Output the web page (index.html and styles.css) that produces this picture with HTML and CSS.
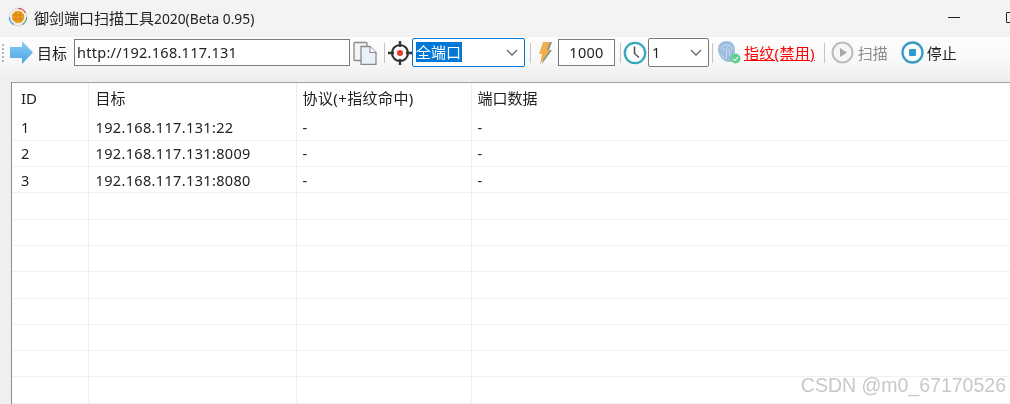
FILE: index.html
```html
<!DOCTYPE html>
<html lang="zh-CN">
<head>
<meta charset="utf-8">
<title>御剑端口扫描工具2020</title>
<link rel="stylesheet" href="styles.css">
</head>
<body>
<div class="window">
  <header class="titlebar">
    <svg class="app-icon" viewBox="0 0 20 20" width="20" height="20">
      <circle cx="10" cy="10" r="8.600" fill="none" stroke="#d8d8d8" stroke-width="1.200"/>
      <path d="M10 1.400A8.600 8.600 0 0 1 17.500 6" fill="none" stroke="#e0584a" stroke-width="1.200"/>
      <path d="M18.600 10A8.600 8.600 0 0 1 14 17.600" fill="none" stroke="#5cb270" stroke-width="1.200"/>
      <path d="M6 17.600A8.600 8.600 0 0 1 1.400 10" fill="none" stroke="#4f9fd8" stroke-width="1.200"/>
      <circle cx="10" cy="10" r="6.200" fill="#f0a020"/>
      <path d="M4.500 8h11M4.500 12h11M8 4.500v11M12 4.500v11" stroke="#c87c10" stroke-width=".8"/>
    </svg>
    <span class="title">御剑端口扫描工具<span class="title-ver">2020(Beta 0.95)</span></span>
    <div class="winctl">
      <span class="min"></span>
      <span class="max"></span>
    </div>
  </header>

  <div class="toolbar">
    <span class="grip"></span>
    <svg class="i-arrow" viewBox="0 0 23 23" width="23" height="23">
      <defs><linearGradient id="arrowfill" x1="0" y1="0" x2="0" y2="1"><stop offset="0" stop-color="#8ad0f6"/><stop offset="1" stop-color="#48a4e2"/></linearGradient></defs>
      <path d="M0 6h12V0l11 11.500L12 23v-6H0z" fill="url(#arrowfill)"/>
    </svg>
    <span class="label lbl-target">目标</span>
    <div class="field f-url">http://192.168.117.131</div>
    <svg class="i-copy" viewBox="0 0 25 24" width="25" height="24">
      <rect x="1" y="1.500" width="13" height="18" rx="1" fill="#f4f4f4" stroke="#8a8a8a" stroke-width="1.300"/>
      <path d="M8 5.500h9l6 6v12H8z" fill="#eaf1fa" stroke="#8a8a8a" stroke-width="1.300"/>
      <path d="M17 5.500v6h6" fill="#fff" stroke="#8a8a8a" stroke-width="1.100"/>
    </svg>
    <span class="sep s1"></span>
    <svg class="i-target" viewBox="0 0 24 24" width="24" height="24">
      <circle cx="12" cy="12" r="8" fill="none" stroke="#333" stroke-width="2.200"/>
      <path d="M12 0v6M12 18v6M0 12h6M18 12h6" stroke="#333" stroke-width="2.400"/>
      <circle cx="12" cy="12" r="3" fill="#e23b2e"/>
    </svg>
    <div class="select sel-port"><span class="selected">全端口</span>
      <svg class="chev" viewBox="0 0 12 7" width="12" height="7"><path d="M1 1l5 5 5-5" fill="none" stroke="#666" stroke-width="1.300"/></svg>
    </div>
    <span class="sep s2"></span>
    <svg class="i-bolt" viewBox="0 0 14 24" width="14" height="24">
      <path d="M7 1h7L11 9h3L4 23l2-10H3z" fill="#8f8f8f"/>
      <path d="M5 1h7L9 9h3L2 23l2-10H1z" fill="#eeb04c"/>
    </svg>
    <div class="field f-num">1000</div>
    <span class="sep s3"></span>
    <svg class="i-clock" viewBox="0 0 24 24" width="24" height="24">
      <circle cx="12" cy="12" r="10.200" fill="#fff" stroke="#36a9bd" stroke-width="2.300"/>
      <path d="M11.500 5.500V12.500L16 16.500" fill="none" stroke="#555" stroke-width="1.600"/>
    </svg>
    <div class="select sel-thread"><span>1</span>
      <svg class="chev" viewBox="0 0 12 7" width="12" height="7"><path d="M1 1l5 5 5-5" fill="none" stroke="#666" stroke-width="1.300"/></svg>
    </div>
    <span class="sep s4"></span>
    <svg class="i-finger" viewBox="0 0 23 23" width="23" height="23">
      <path d="M0 8C0 3 4 0 8.500 0S17 3 17 9c0 5-1 11-5 12C6 22 0 15 0 8z" fill="#9dbde0"/>
      <path d="M3 9c0-7 11-7 11 0M5.500 10c0-4 6-4 6 0v5M8.500 9v9M3.500 13c1 3 2 4 3 5" fill="none" stroke="#c8dbee" stroke-width="1"/>
      <circle cx="17.500" cy="17.500" r="5" fill="#5fd08f"/>
      <path d="M15 18l2 1.500 3-3.500" fill="none" stroke="#d5f5e2" stroke-width="1.200"/>
    </svg>
    <a class="link" href="#">指纹(禁用)</a>
    <span class="sep s5"></span>
    <svg class="i-play" viewBox="0 0 23 23" width="23" height="23">
      <circle cx="11.500" cy="11.500" r="10" fill="#f6f6f6" stroke="#bdbdbd" stroke-width="2"/>
      <path d="M9 7l7 4.500L9 16z" fill="#a8a8a8"/>
    </svg>
    <span class="label dim">扫描</span>
    <svg class="i-stop" viewBox="0 0 23 23" width="23" height="23">
      <circle cx="11.500" cy="11.500" r="10" fill="#fff" stroke="#3a9cc4" stroke-width="2.300"/>
      <rect x="8" y="8" width="7" height="7" rx="1" fill="#2f9ccb"/>
    </svg>
    <span class="label">停止</span>
  </div>

  <main class="content">
    <table class="grid">
      <colgroup><col class="c1"><col class="c2"><col class="c3"><col></colgroup>
      <thead>
        <tr><th>ID</th><th>目标</th><th>协议(+指纹命中)</th><th>端口数据</th></tr>
      </thead>
      <tbody>
        <tr><td>1</td><td>192.168.117.131:22</td><td>-</td><td>-</td></tr>
        <tr><td>2</td><td>192.168.117.131:8009</td><td>-</td><td>-</td></tr>
        <tr><td>3</td><td>192.168.117.131:8080</td><td>-</td><td>-</td></tr>
        <tr><td></td><td></td><td></td><td></td></tr>
        <tr><td></td><td></td><td></td><td></td></tr>
        <tr><td></td><td></td><td></td><td></td></tr>
        <tr><td></td><td></td><td></td><td></td></tr>
        <tr><td></td><td></td><td></td><td></td></tr>
        <tr><td></td><td></td><td></td><td></td></tr>
        <tr><td></td><td></td><td></td><td></td></tr>
        <tr><td></td><td></td><td></td><td></td></tr>
      </tbody>
    </table>
    <div class="watermark">CSDN @m0_67170526</div>
  </main>
</div>
</body>
</html>
```
FILE: styles.css
```css
* { box-sizing: border-box; }
html, body { margin: 0; height: 100%; overflow: hidden; }
body {
  width: 1010px;
  height: 404px;
  background: #f0f0f0;
  font-family: "Noto Sans", "Noto Sans CJK SC", sans-serif;
  font-size: 14.500px;
  color: #222;
}
.window {
  position: relative;
  width: 1010px;
  height: 404px;
  overflow: hidden;
  display: flex;
  flex-direction: column;
  filter: blur(.3px);
}

.titlebar {
  height: 37px;
  flex: none;
  background: #f3f3f3;
  display: flex;
  align-items: center;
  padding: 0 0 3px 8px;
}
.app-icon { flex: none; }
.title { margin-left: 6px; font-size: 15px; color: #222; white-space: nowrap; }
.title-ver { font-size: 13.800px; }
.winctl { margin-left: auto; display: flex; align-items: center; }
.min { width: 12px; height: 1px; background: #222; margin-right: 46px; }
.max { width: 10px; height: 11px; border: 1px solid #222; border-radius: 1px; margin-right: -6px; }

.toolbar {
  height: 45px;
  flex: none;
  background: linear-gradient(#fdfdfd 0%, #f9f9f9 50%, #ededed 100%);
  display: flex;
  align-items: center;
  padding: 0 0 14px 2px;
}
.toolbar svg { flex: none; }
.grip { width: 2px; height: 18px; margin-right: 6px; background: repeating-linear-gradient(#b5b5b5 0 2px, transparent 2px 4px); }
.label { white-space: nowrap; font-size: 15px; margin-left: 3px; color: #222; line-height: 20px; }
.lbl-target { margin-left: 4px; margin-right: 7px; }
.dim { color: #8c8c8c; margin-left: 4px; }
.field {
  height: 27px;
  background: #fff;
  border: 1px solid #7a7a7a;
  display: flex;
  align-items: center;
  white-space: nowrap;
  color: #222;
  padding-bottom: 2px;
}
.f-url { width: 276px; padding-left: 2px; letter-spacing: .27px; }
.f-num { width: 57px; justify-content: center; margin-left: 6px; letter-spacing: .3px; }
.i-copy { margin-left: 3px; }
.sep { width: 1px; height: 20px; background: #c4c4c4; flex: none; }
.s1 { margin-left: 6px; margin-right: 3px; }
.i-target { margin-right: 0; }
.s2 { margin-left: 5px; margin-right: 7px; }
.s3 { margin-left: 5px; margin-right: 2px; }
.s4 { margin-left: 3px; margin-right: 5px; }
.s5 { margin-left: 9px; margin-right: 6px; }
.select {
  height: 29px;
  background: #fff;
  border: 1px solid #7a7a7a;
  border-radius: 2px;
  display: flex;
  align-items: center;
  justify-content: space-between;
  padding: 0 6px 2px 3px;
}
.sel-port { width: 113px; border-color: #0078d7; font-size: 15px; }
.sel-thread { width: 61px; margin-left: 1px; }
.selected { background: #0078d7; color: #fff; line-height: 20px; padding-right: 1px; }
.chev { margin-top: 2px; }
.link { color: #f00; text-decoration: underline; margin-left: 3px; white-space: nowrap; font-size: 15px; line-height: 20px; letter-spacing: .3px; }
.i-stop { margin-left: 13px; }

.content {
  flex: 1;
  min-height: 0;
  margin-left: 11px;
  background: #fff;
  border-top: 1px solid #9aa0a6;
  border-left: 1px solid #8a8a8a;
  overflow: hidden;
}
.grid { width: 999px; table-layout: fixed; border-collapse: collapse; font-size: 14.500px; }
.c1 { width: 76px; }
.c2 { width: 208px; }
.c3 { width: 175px; }
.grid th {
  height: 31px;
  font-weight: 400;
  font-size: 15px;
  text-align: left;
  padding: 0 0 2px 8px;
  border-right: 1px solid #ececec;
  color: #222;
}
.grid th:last-child { border-right: 0; }
.grid td {
  height: 26.300px;
  padding: 0 0 0 8px;
  border-right: 1px solid #f0f0f0;
  border-bottom: 1px solid #f0f0f0;
  color: #222;
  letter-spacing: .35px;
  white-space: nowrap;
}
.grid td:last-child { border-right: 0; }
.grid th:nth-child(2), .grid td:nth-child(2) { padding-left: 7px; }
.grid th:nth-child(3), .grid td:nth-child(3) { padding-left: 6px; }
.grid th:nth-child(3) { letter-spacing: .4px; }
.grid th:nth-child(4), .grid td:nth-child(4) { padding-left: 6px; }
.grid th:first-child, .grid td:first-child { padding-left: 9px; }
.watermark {
  position: absolute;
  right: 4px;
  bottom: 7px;
  font-family: "Liberation Sans", sans-serif;
  font-size: 19.500px;
  color: #c8c8c8;
  white-space: nowrap;
}
```
